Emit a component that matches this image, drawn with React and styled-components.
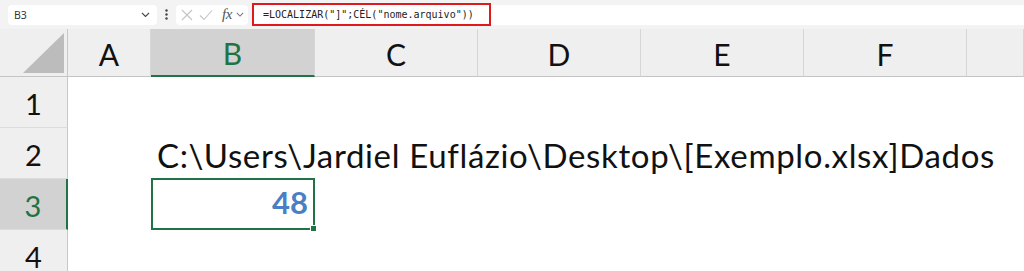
import styled, { createGlobalStyle } from "styled-components";

const GlobalStyle = createGlobalStyle`
  body {
    margin: 0;
    background: #ffffff;
    overflow: hidden;
    font-family: Lato, "Liberation Sans", sans-serif;
  }
`

const green = "#217346";

const Page = styled.div`
  width: 1024px;
  height: 271px;
  overflow: hidden;
  background: #ffffff;
`

const FormulaBar = styled.div`
  height: 29px;
  box-sizing: border-box;
  background: #f3f3f3;
  display: flex;
  align-items: center;
  padding-left: 8px;
`

const NameBox = styled.div`
  width: 149px;
  height: 20px;
  box-sizing: border-box;
  background: #ffffff;
  border-radius: 4px;
  display: flex;
  align-items: center;
  justify-content: space-between;
  padding: 0 7px 0 6px;
  font-family: "Noto Sans", "Liberation Sans", sans-serif;
  font-size: 10.5px;
  color: #333333;
`

const Dots = styled.div`
  width: 19px;
  display: flex;
  justify-content: center;
`

const FnBox = styled.div`
  width: 72px;
  height: 20px;
  box-sizing: border-box;
  background: #ffffff;
  border-radius: 4px;
  display: flex;
  align-items: center;
  padding-left: 4px;
  gap: 4px;
`

const FxLabel = styled.span`
  font-family: "Liberation Serif", serif;
  font-style: italic;
  font-size: 15px;
  color: #555555;
  margin-left: 4px;
  letter-spacing: -0.5px;
`

const FormulaInput = styled.div`
  flex: 1;
  height: 20px;
  margin-left: 4px;
  background: #ffffff;
  display: flex;
  align-items: center;
`

const Highlight = styled.div`
  width: 239px;
  height: 23px;
  box-sizing: border-box;
  border: 2px solid #e0191f;
  display: flex;
  align-items: center;
  padding-left: 9px;
  font-family: "DejaVu Sans Mono", monospace;
  font-size: 10px;
  color: #222222;
  white-space: nowrap;
`

const Sheet = styled.div`
  display: grid;
  grid-template-columns: 68px 83px 164px 163px 163px 163px 163px 1fr;
  grid-template-rows: 48px 51px 51px 51px 51px;
`

const Corner = styled.div`
  background: #efefef;
  border-right: 1px solid #c8c8c8;
  border-bottom: 1px solid #c4c4c4;
  display: flex;
  align-items: flex-end;
  justify-content: flex-end;
  padding: 0 3px 3px 0;
`

const ColHead = styled.div`
  background: ${p => (p.$active ? "#d2d2d2" : "#efefef")};
  color: ${p => (p.$active ? green : "#111111")};
  border-bottom: ${p => (p.$active ? `2px solid ${green}` : "1px solid #c4c4c4")};
  border-right: 1px solid #d6d6d6;
  display: flex;
  align-items: center;
  justify-content: center;
  font-size: 30px;
  padding-top: 2px;
`

const RowHead = styled.div`
  background: ${p => (p.$active ? "#d2d2d2" : "#efefef")};
  color: ${p => (p.$active ? green : "#111111")};
  border-right: ${p => (p.$active ? `2px solid ${green}` : "1px solid #c8c8c8")};
  border-bottom: 1px solid #dcdcdc;
  display: flex;
  align-items: center;
  justify-content: center;
  font-size: 29px;
  padding-top: 2px;
`

const Cell = styled.div`
  position: relative;
  grid-column: ${p => p.$span || "auto"};
  display: flex;
  align-items: flex-end;
  justify-content: ${p => (p.$right ? "flex-end" : "flex-start")};
  padding: 0 6px 4px 6px;
  white-space: nowrap;
  font-size: 33px;
  letter-spacing: 0.65px;
  color: #111111;
`

const SelectedCell = styled(Cell)`
  border: 2px solid ${green};
  margin: -1px 0 0 0;
  padding: 0 5px 7px 6px;
  font-weight: 700;
  font-size: 31px;
  letter-spacing: 0;
  color: #4a7fc4;
`

const FillHandle = styled.span`
  position: absolute;
  right: -4px;
  bottom: -4px;
  width: 5px;
  height: 5px;
  background: ${green};
  border: 1px solid #ffffff;
`

const Chevron = ({ size = 9, color = "#444" }) => (
  <svg width={size} height={size * 0.6} viewBox="0 0 10 6">
    <path d="M1 1l4 4 4-4" fill="none" stroke={color} strokeWidth="1.3" />
  </svg>
);

const cols = ["A", "B", "C", "D", "E", "F", ""];

export default function App() {
  return (
    <Page>
      <GlobalStyle />
      <FormulaBar>
        <NameBox>
          <span>B3</span>
          <Chevron />
        </NameBox>
        <Dots>
          <svg width="3" height="11" viewBox="0 0 3 11">
            <circle cx="1.5" cy="1.5" r="1.2" fill="#444" />
            <circle cx="1.5" cy="5.5" r="1.2" fill="#444" />
            <circle cx="1.5" cy="9.5" r="1.2" fill="#444" />
          </svg>
        </Dots>
        <FnBox>
          <svg width="14" height="14" viewBox="0 0 14 14">
            <path d="M2 2l10 10M12 2L2 12" stroke="#c4c4c4" strokeWidth="1.1" />
          </svg>
          <svg width="16" height="14" viewBox="0 0 16 14">
            <path d="M2 7.5l4 4L14 2.5" fill="none" stroke="#c4c4c4" strokeWidth="1.1" />
          </svg>
          <FxLabel>fx</FxLabel>
          <Chevron size={8} color="#777" />
        </FnBox>
        <FormulaInput>
          <Highlight>=LOCALIZAR("]";CÉL("nome.arquivo"))</Highlight>
        </FormulaInput>
      </FormulaBar>

      <Sheet>
        <Corner>
          <svg width="41" height="40" viewBox="0 0 41 40">
            <polygon points="0,40 41,0 41,40" fill="#bcbcbc" />
          </svg>
        </Corner>
        {cols.map((c, i) => (
          <ColHead key={i} $active={c === "B"}>{c}</ColHead>
        ))}

        <RowHead>1</RowHead>
        <Cell $span="2 / -1" />

        <RowHead>2</RowHead>
        <Cell />
        <Cell $span="3 / -1">C:\Users\Jardiel Euflázio\Desktop\[Exemplo.xlsx]Dados</Cell>

        <RowHead $active>3</RowHead>
        <Cell />
        <SelectedCell $right>
          48
          <FillHandle />
        </SelectedCell>
        <Cell $span="4 / -1" />

        <RowHead>4</RowHead>
        <Cell $span="2 / -1" />
      </Sheet>
    </Page>
  );
}
